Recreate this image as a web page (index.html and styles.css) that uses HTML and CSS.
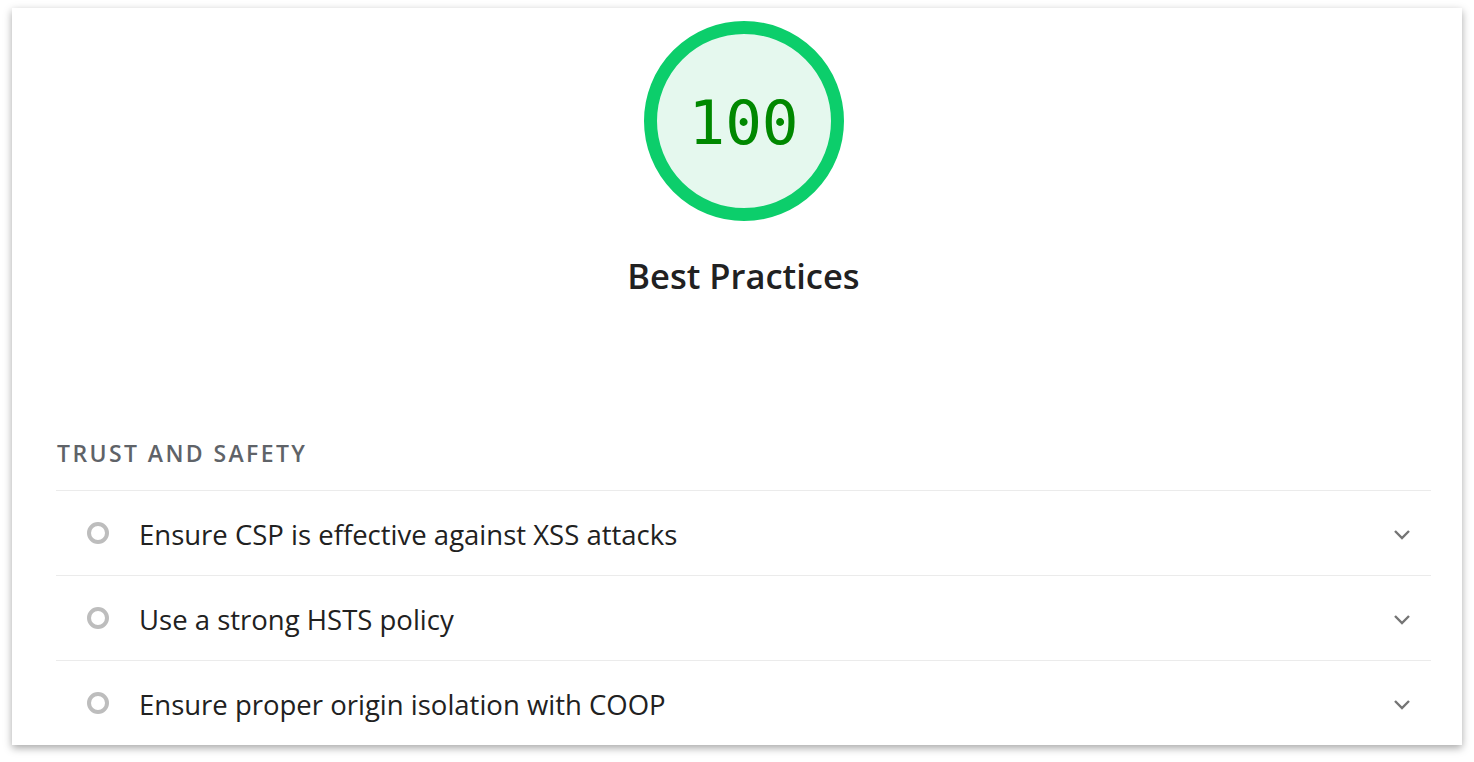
FILE: index.html
```html
<!DOCTYPE html>
<html lang="en">
  <head>
    <meta charset="UTF-8" />
    <title>Best Practices</title>
    <link rel="stylesheet" href="styles.css">
  </head>
  <body>
    <div class="report-card">
      <div class="category-header">
        <div class="gauge">
          <span class="gauge-score">100</span>
        </div>
        <h2 class="category-title">Best Practices</h2>
      </div>

      <div class="audit-group">
        <h3 class="group-title">Trust and Safety</h3>
        <div class="audit">
          <span class="audit-icon"></span>
          <span class="audit-title">Ensure CSP is effective against XSS attacks</span>
          <svg class="chevron" width="18" height="11" viewBox="0 0 18 11"><path d="M2 2l7 7 7-7" /></svg>
        </div>
        <div class="audit">
          <span class="audit-icon"></span>
          <span class="audit-title">Use a strong HSTS policy</span>
          <svg class="chevron" width="18" height="11" viewBox="0 0 18 11"><path d="M2 2l7 7 7-7" /></svg>
        </div>
        <div class="audit">
          <span class="audit-icon"></span>
          <span class="audit-title">Ensure proper origin isolation with COOP</span>
          <svg class="chevron" width="18" height="11" viewBox="0 0 18 11"><path d="M2 2l7 7 7-7" /></svg>
        </div>
      </div>
    </div>
  </body>
</html>
```

FILE: styles.css
```css
:root {
  --pass-color: #0cce6b;
  --pass-fill: #e5f8ee;
  --pass-text: #008800;
  --text-color: #212121;
  --muted-color: #5f6368;
  --border-color: #ebebeb;
  --icon-color: #bdbdbd;
}
html,
body {
  margin: 0;
  height: 100%;
  background-color: #ffffff;
  overflow: hidden;
}
body {
  font-family: "Open Sans", "Noto Sans", sans-serif;
  color: var(--text-color);
  padding: 8px 12px 0;
  box-sizing: border-box;
}
.report-card {
  width: 1450px;
  height: 737px;
  box-sizing: border-box;
  padding: 13px 31px 0 44px;
  background-color: #ffffff;
  box-shadow: 0 3px 8px rgba(0, 0, 0, 0.35);
  overflow: hidden;
}
.category-header {
  display: flex;
  flex-direction: column;
  align-items: center;
}
.gauge {
  width: 174px;
  height: 174px;
  border: 13px solid var(--pass-color);
  border-radius: 50%;
  background-color: var(--pass-fill);
  display: flex;
  justify-content: center;
  align-items: center;
}
.gauge-score {
  font-family: "DejaVu Sans Mono", monospace;
  font-size: 61px;
  color: var(--pass-text);
  margin-top: 2px;
}
.category-title {
  margin: 33px 0 0;
  font-size: 34.5px;
  font-weight: 600;
  line-height: 44px;
}
.audit-group {
  margin-top: 142px;
}
.group-title {
  margin: 0 0 24px 1px;
  font-size: 23px;
  font-weight: 600;
  letter-spacing: 2.4px;
  text-transform: uppercase;
  color: var(--muted-color);
  line-height: 26px;
}
.audit {
  display: flex;
  align-items: center;
  height: 81px;
  padding-top: 3px;
  border-top: 1px solid var(--border-color);
}
.audit-icon {
  width: 14px;
  height: 14px;
  border: 4px solid var(--icon-color);
  border-radius: 50%;
  margin: 0 30px 3px 31px;
  flex-shrink: 0;
}
.audit-title {
  flex: 1;
  font-size: 27.5px;
  line-height: 36px;
}
.chevron {
  margin-right: 20px;
  fill: none;
  stroke: #757575;
  stroke-width: 2.4;
}
```
